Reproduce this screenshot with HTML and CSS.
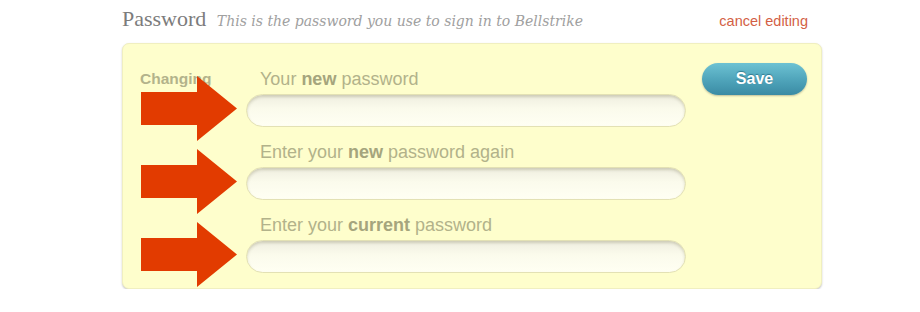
FILE: index.html
```html
<!DOCTYPE html>
<html>
<head>
<meta charset="utf-8">
<link rel="stylesheet" href="styles.css">
</head>
<body>
<div class="wrap">
  <div class="header">
    <div class="heading">
      <span class="title">Password</span>
      <span class="subtitle">This is the password you use to sign in to Bellstrike</span>
    </div>
    <a class="cancel" href="#">cancel editing</a>
  </div>
  <div class="card">
    <div class="side">Changing</div>
    <div class="fields">
      <div class="row">
        <label class="label">Your <b>new</b> password</label>
        <div class="input"></div>
        <svg class="arrow" viewBox="0 0 96 65" width="96" height="65"><polygon points="0,16 56,16 56,0 96,32.5 56,65 56,49 0,49" fill="#e23b00"/></svg>
      </div>
      <div class="row">
        <label class="label">Enter your <b>new</b> password again</label>
        <div class="input"></div>
        <svg class="arrow" viewBox="0 0 96 65" width="96" height="65"><polygon points="0,16 56,16 56,0 96,32.5 56,65 56,49 0,49" fill="#e23b00"/></svg>
      </div>
      <div class="row">
        <label class="label">Enter your <b>current</b> password</label>
        <div class="input"></div>
        <svg class="arrow" viewBox="0 0 96 65" width="96" height="65"><polygon points="0,16 56,16 56,0 96,32.5 56,65 56,49 0,49" fill="#e23b00"/></svg>
      </div>
    </div>
    <div class="actions">
      <button class="save">Save</button>
    </div>
  </div>
</div>
</body>
</html>
```

FILE: styles.css
```css
html, body {
  margin: 0;
  padding: 0;
  background: #ffffff;
}
.wrap {
  margin-left: 122px;
  width: 700px;
  font-family: "Liberation Sans", Arial, sans-serif;
}
.header {
  display: flex;
  justify-content: space-between;
  align-items: baseline;
  height: 43px;
}
.heading {
  padding-top: 6px;
}
.title {
  font-family: "Liberation Serif", "Times New Roman", serif;
  font-size: 22px;
  color: #7c7c7c;
}
.subtitle {
  font-family: "DejaVu Serif", Georgia, serif;
  font-style: italic;
  font-size: 14px;
  color: #a0a0a0;
  margin-left: 6px;
}
.cancel {
  font-size: 14.5px;
  color: #d35f45;
  text-decoration: none;
  margin-right: 14px;
}
.card {
  display: flex;
  align-items: flex-start;
  background: #fefecc;
  border: 1px solid #f0efc0;
  border-radius: 7px;
  box-shadow: 0 1px 2px rgba(0, 0, 0, 0.22);
  padding: 24px 14px 15px 17px;
}
.side {
  width: 106px;
  font-size: 15.5px;
  font-weight: bold;
  color: #b3b38b;
  line-height: 22px;
}
.fields {
  width: 440px;
  display: flex;
  flex-direction: column;
  gap: 14px;
}
.row {
  position: relative;
  display: flex;
  flex-direction: column;
}
.label {
  display: block;
  font-size: 18px;
  line-height: 22px;
  color: #b2b28a;
  padding-left: 14px;
  margin-bottom: 4px;
}
.label b {
  color: #a5a57d;
}
.input {
  height: 31px;
  border: 1px solid #e3e1b4;
  border-radius: 17px;
  background: linear-gradient(#efeee0, #fbfbec 45%, #fffff3);
  box-shadow: inset 0 2px 3px rgba(120, 115, 80, 0.28);
}
.arrow {
  position: absolute;
  left: -105px;
  top: 8px;
  display: block;
}
.actions {
  margin-left: 16px;
}
.save {
  display: block;
  margin-top: -5px;
  width: 105px;
  height: 32px;
  border: none;
  border-radius: 16px;
  background: linear-gradient(#6dc2d3, #4ea3b9 55%, #3a8ba4);
  box-shadow: 0 1px 2px rgba(0, 0, 0, 0.25);
  color: #ffffff;
  font-family: "Liberation Sans", Arial, sans-serif;
  font-weight: bold;
  font-size: 16px;
  text-shadow: 0 -1px 1px rgba(0, 60, 80, 0.45);
  padding: 0;
}
```
